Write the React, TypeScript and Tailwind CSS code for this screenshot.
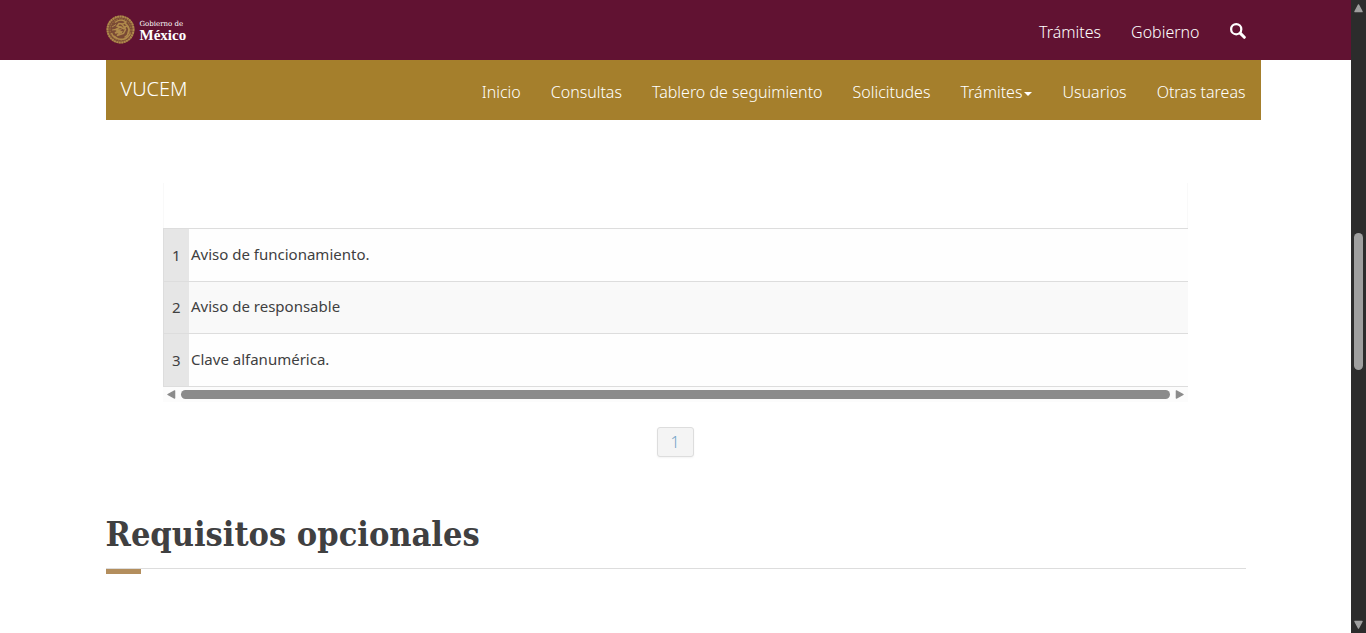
import React from "react";

const menu = ["Inicio", "Consultas", "Tablero de seguimiento", "Solicitudes", "Trámites", "Usuarios", "Otras tareas"];
const rows = ["Aviso de funcionamiento.", "Aviso de responsable", "Clave alfanumérica."];

function Seal() {
  return (
    <svg className="h-[30px] w-[30px]" viewBox="0 0 60 60" fill="none" stroke="#b08a4c" aria-hidden="true">
      <circle cx="29" cy="29" r="28" fill="#7a4a35" stroke="none" />
      <circle cx="29" cy="29" r="26" strokeWidth="4" strokeDasharray="4 1" />
      <circle cx="29" cy="29" r="21" strokeWidth="3" strokeDasharray="3 2" stroke="#94683c" />
      <path d="M18 15c7-6 16-6 22-1l-6 4-8-1-4 5 7 2-10 5 9 1-10 6 12-2-8 7 13-4 4-8-3-5 7-2 3 7-3 11-6 5" strokeWidth="3" />
      <path d="M37 16c7 4 11 12 8 22M23 22l14 6M20 29l12 7M31 18l8 8" strokeWidth="3" />
      <path d="M11 36c5 14 28 19 38 1M16 42c8 8 20 10 28 1" strokeWidth="3" />
      <path d="M12 24l8-5M12 30l7-1" strokeWidth="2" />
    </svg>
  );
}

function Triangle({ className, d }: { className: string; d: string }) {
  return (
    <svg className={className} viewBox="0 0 10 10" fill="currentColor" stroke="currentColor" strokeWidth="1.4" strokeLinejoin="round" aria-hidden="true">
      <path d={d} />
    </svg>
  );
}

export default function App() {
  return (
    <div className="flex min-h-screen bg-white font-['Noto_Sans',sans-serif] text-[#404041]">
      <div className="min-w-0 flex-1">
        <header className="bg-[#611232]">
          <div className="mx-auto flex h-[60px] max-w-[1170px] items-center justify-between px-[15px] font-light text-white">
            <a href="#inicio" className="flex items-center gap-1" aria-label="Gobierno de México">
              <Seal />
              <span className="flex flex-col font-['DejaVu_Serif',serif]">
                <span className="text-[7px] leading-[9px] font-normal">Gobierno de</span>
                <span className="font-['Liberation_Serif',serif] text-[15px] leading-[12px] font-bold">México</span>
              </span>
            </a>
            <nav className="flex items-center gap-[30px] pt-1 text-base">
              <a href="#tramites">Trámites</a>
              <a href="#gobierno">Gobierno</a>
              <button type="button" aria-label="Buscar" className="pb-[2px]">
                <svg className="h-4 w-4" viewBox="0 0 17 17" fill="none" stroke="white" aria-hidden="true">
                  <circle cx="6.6" cy="6.6" r="5.4" strokeWidth="2.4" />
                  <path d="M10.8 10.8l4.4 4.4" strokeWidth="3.2" strokeLinecap="round" />
                </svg>
              </button>
            </nav>
          </div>
        </header>

        <div className="mx-auto max-w-[1170px] pl-[15px]">
          <nav className="flex h-[60px] items-center justify-between bg-[#a57f2c] px-[15px] font-light text-white">
            <a href="#vucem" className="pb-[2px] text-xl">VUCEM</a>
            <div className="flex gap-[30px] pt-1 text-base">
              {menu.map((item, i) => (
                <a key={item} href={"#menu-" + i} className="flex items-center gap-[2px]">
                  {item}
                  {item === "Trámites" && (
                    <svg className="mt-1 h-1 w-2" viewBox="0 0 8 4" fill="white" aria-hidden="true"><path d="M0 0h8L4 4z" /></svg>
                  )}
                </a>
              ))}
            </div>
          </nav>
        </div>

        <main className="mx-auto max-w-[1170px] px-[15px] pt-[63px]">
          <section className="mr-[58px] ml-[57px]">
            <div className="h-[45px] border-x border-[#f9f9f9]" />
            <table className="w-full border-collapse text-[15px]">
              <tbody>
                {rows.map((row, i) => (
                  <tr key={row} className="h-[53px] border-y border-[#ddd] bg-[#fefefe] even:h-[52px] even:bg-[#f9f9f9]">
                    <th scope="row" className="w-[26px] border-l border-[#ddd] bg-[#e6e6e6] p-0 text-center font-normal">{i + 1}</th>
                    <td className="p-0 pb-[2px] pl-[2px]">{row}</td>
                  </tr>
                ))}
              </tbody>
            </table>
            <div className="flex h-[15px] items-center gap-[5px] bg-[#fcfcfc] px-1 text-[#8b8b8b]">
              <Triangle className="h-[9px] w-[9px]" d="M8.5 1v8L1 5z" />
              <div className="h-[9px] flex-1 rounded-full bg-[#8b8b8b]" />
              <Triangle className="h-[9px] w-[9px]" d="M1.5 1v8L9 5z" />
            </div>
            <div className="mt-[25px] flex justify-center">
              <button type="button" className="h-[30px] w-[37px] rounded-[3px] border border-[#ddd] bg-[#f4f4f4] text-base font-light text-[#6fa3c7] shadow-xs">1</button>
            </div>
          </section>

          <h2 className="relative mt-[50px] border-b border-[#ddd] pb-[6px] font-['DejaVu_Serif_Condensed','DejaVu_Serif',serif] text-[34px] leading-[55px] font-bold">
            Requisitos opcionales
            <span className="absolute top-full left-0 mt-px h-[5px] w-[35px] bg-[#b38e5d]" />
          </h2>
        </main>
      </div>

      <aside className="sticky top-0 flex h-screen w-[15px] flex-col items-center bg-[#2c2c2c] py-1 text-[#9f9f9f]" aria-hidden="true">
        <Triangle className="h-[9px] w-[9px]" d="M1 8.5h8L5 1z" />
        <div className="flex w-full flex-1 flex-col items-center">
          <div className="grow-[220]" />
          <div className="h-[137px] w-[9px] rounded-full bg-[#9f9f9f]" />
          <div className="grow-[251]" />
        </div>
        <Triangle className="h-[9px] w-[9px]" d="M1 1.5h8L5 9z" />
      </aside>
    </div>
  );
}
